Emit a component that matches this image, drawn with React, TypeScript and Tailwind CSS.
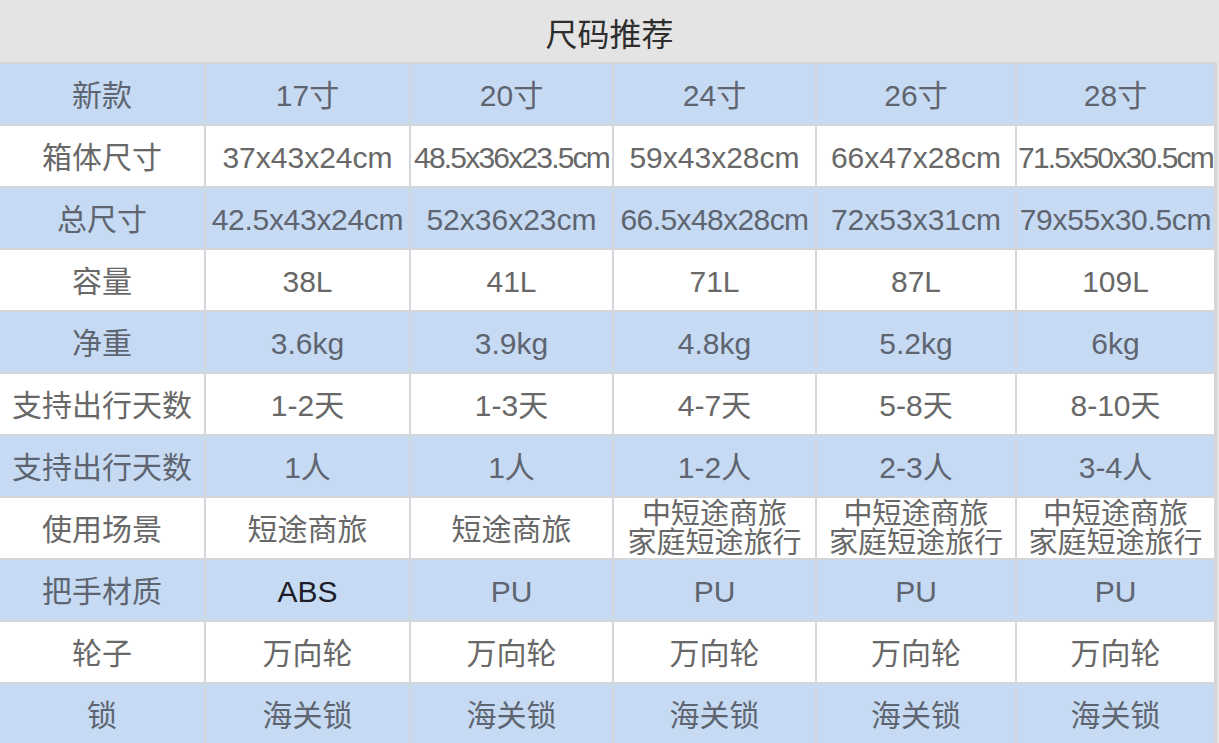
import React from "react";

type Cell = string | { text: string; cls?: string };

const rows: { label: string; cells: Cell[] }[] = [
    { label: "新款", cells: ["17寸", "20寸", "24寸", "26寸", "28寸"] },
    {
        label: "箱体尺寸",
        cells: [
            "37x43x24cm",
            { text: "48.5x36x23.5cm", cls: "tracking-[-1.8px]" },
            "59x43x28cm",
            "66x47x28cm",
            { text: "71.5x50x30.5cm", cls: "tracking-[-1.8px]" },
        ],
    },
    {
        label: "总尺寸",
        cells: [
            { text: "42.5x43x24cm", cls: "tracking-[-0.3px]" },
            "52x36x23cm",
            { text: "66.5x48x28cm", cls: "tracking-[-0.6px]" },
            "72x53x31cm",
            { text: "79x55x30.5cm", cls: "tracking-[-0.3px]" },
        ],
    },
    { label: "容量", cells: ["38L", "41L", "71L", "87L", "109L"] },
    { label: "净重", cells: ["3.6kg", "3.9kg", "4.8kg", "5.2kg", "6kg"] },
    { label: "支持出行天数", cells: ["1-2天", "1-3天", "4-7天", "5-8天", "8-10天"] },
    { label: "支持出行天数", cells: ["1人", "1人", "1-2人", "2-3人", "3-4人"] },
    {
        label: "使用场景",
        cells: ["短途商旅", "短途商旅", "中短途商旅\n家庭短途旅行", "中短途商旅\n家庭短途旅行", "中短途商旅\n家庭短途旅行"],
    },
    { label: "把手材质", cells: [{ text: "ABS", cls: "text-[#1c1d28]" }, "PU", "PU", "PU", "PU"] },
    { label: "轮子", cells: ["万向轮", "万向轮", "万向轮", "万向轮", "万向轮"] },
    { label: "锁", cells: ["海关锁", "海关锁", "海关锁", "海关锁", "海关锁"] },
];

function CellText({ cell }: { cell: Cell }) {
    const c = typeof cell === "string" ? { text: cell } : cell;
    const lines = c.text.split("\n");
    if (lines.length > 1) {
        return (
            <div className="flex flex-col items-center leading-[29px] text-[29px]">
                {lines.map((l, i) => (
                    <span key={i} className="whitespace-nowrap">{l}</span>
                ))}
            </div>
        );
    }
    return <span className={`whitespace-nowrap ${c.cls ?? ""}`}>{c.text}</span>;
}

export default function App() {
    return (
        <div
            className="w-[1219px] h-[743px] overflow-hidden bg-[#e4e4e4] text-[#686868]"
            style={{ fontFamily: '"Liberation Sans", "Noto Sans CJK SC", sans-serif' }}
        >
            {/* Title */}
            <div className="h-[62px] flex items-center justify-center text-[32px] font-normal text-[#2e2e2e] pt-2">
                尺码推荐
            </div>

            {/* Table */}
            <div className="w-[1217px] border-r-[3px] border-[#d6d6d6]">
                {rows.map((row, r) => {
                    const blue = r % 2 === 0;
                    return (
                        <div
                            key={r}
                            className={`grid grid-cols-[204px_205px_203px_203px_200px_199px] h-[62px] border-t-2 border-[#d3d6da] ${
                                blue ? "bg-[#c6dbf3] text-[#5e6570]" : "bg-white text-[#686868]"
                            }`}
                        >
                            <div className="flex items-center justify-center text-[30px] pt-0.5">
                                <span className="whitespace-nowrap">{row.label}</span>
                            </div>
                            {row.cells.map((cell, i) => (
                                <div
                                    key={i}
                                    className="flex items-center justify-center border-l-2 border-[#d3d6da] text-[30px] pt-0.5 overflow-hidden"
                                >
                                    <CellText cell={cell} />
                                </div>
                            ))}
                        </div>
                    );
                })}
            </div>
        </div>
    );
}
